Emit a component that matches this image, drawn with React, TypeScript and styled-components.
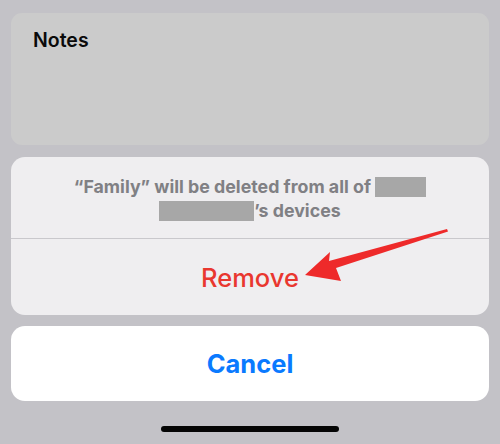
import styled, { createGlobalStyle } from 'styled-components';

const GlobalStyle = createGlobalStyle`
  html, body {
    margin: 0;
    padding: 0;
    background: #c3c2c7;
  }
  body {
    font-family: Inter, "Noto Sans", "Liberation Sans", sans-serif;
    -webkit-font-smoothing: antialiased;
  }
`;

const Screen = styled.div`
  position: relative;
  width: 500px;
  height: 444px;
  box-sizing: border-box;
  padding: 13px 11px 0;
  display: flex;
  flex-direction: column;
  overflow: hidden;
`;

const NotesCard = styled.div`
  height: 132px;
  box-sizing: border-box;
  background: #cbcbcb;
  border-radius: 11px;
  padding: 15px 22px;
`;

const NotesLabel = styled.div`
  font-size: 19.5px;
  font-weight: 600;
  line-height: 24px;
  color: #0a0a0a;
`;

const Sheet = styled.div`
  margin-top: 12px;
  background: #efeef0;
  border-radius: 14px;
  display: flex;
  flex-direction: column;
  overflow: hidden;
`;

const Message = styled.div`
  height: 82px;
  box-sizing: border-box;
  padding-top: 18px;
  text-align: center;
  font-size: 17.8px;
  font-weight: 700;
  line-height: 24px;
  color: #808084;
  border-bottom: 1px solid #c9c8cc;
`;

const Redacted = styled.span<{ w: number }>`
  display: inline-block;
  width: ${(p) => p.w}px;
  height: 20px;
  background: #a7a7a7;
  vertical-align: -4px;
`;

const ActionButton = styled.div<{ tone: 'red' | 'blue'; bold?: boolean }>`
  display: flex;
  align-items: center;
  justify-content: center;
  font-size: 25.5px;
  font-weight: ${(p) => (p.bold ? 700 : 500)};
  color: ${(p) => (p.tone === 'red' ? '#e9372f' : '#0a7aff')};
`;

const RemoveRow = styled(ActionButton)`
  height: 76px;
`;

const CancelCard = styled(ActionButton)`
  margin-top: 11px;
  height: 75px;
  background: #ffffff;
  border-radius: 14px;
`;

const HomeBar = styled.div`
  align-self: center;
  margin-top: 25px;
  width: 178px;
  height: 6px;
  border-radius: 3px;
  background: #050505;
`;

const Overlay = styled.svg`
  position: absolute;
  left: 0;
  top: 0;
  pointer-events: none;
`;

export default function App() {
  return (
    <>
      <GlobalStyle />
      <Screen>
        <NotesCard>
          <NotesLabel>Notes</NotesLabel>
        </NotesCard>
        <Sheet>
          <Message>
            “Family” will be deleted from all of <Redacted w={51} />
            <br />
            <Redacted w={95} />’s devices
          </Message>
          <RemoveRow tone="red">Remove</RemoveRow>
        </Sheet>
        <CancelCard tone="blue" bold>
          Cancel
        </CancelCard>
        <HomeBar />
        <Overlay width="500" height="444" viewBox="0 0 500 444">
          <polygon
            points="305,275 330,252 329,261 447,229 448,231.5 336,268 341,281"
            fill="#ee2a2a"
          />
        </Overlay>
      </Screen>
    </>
  );
}
